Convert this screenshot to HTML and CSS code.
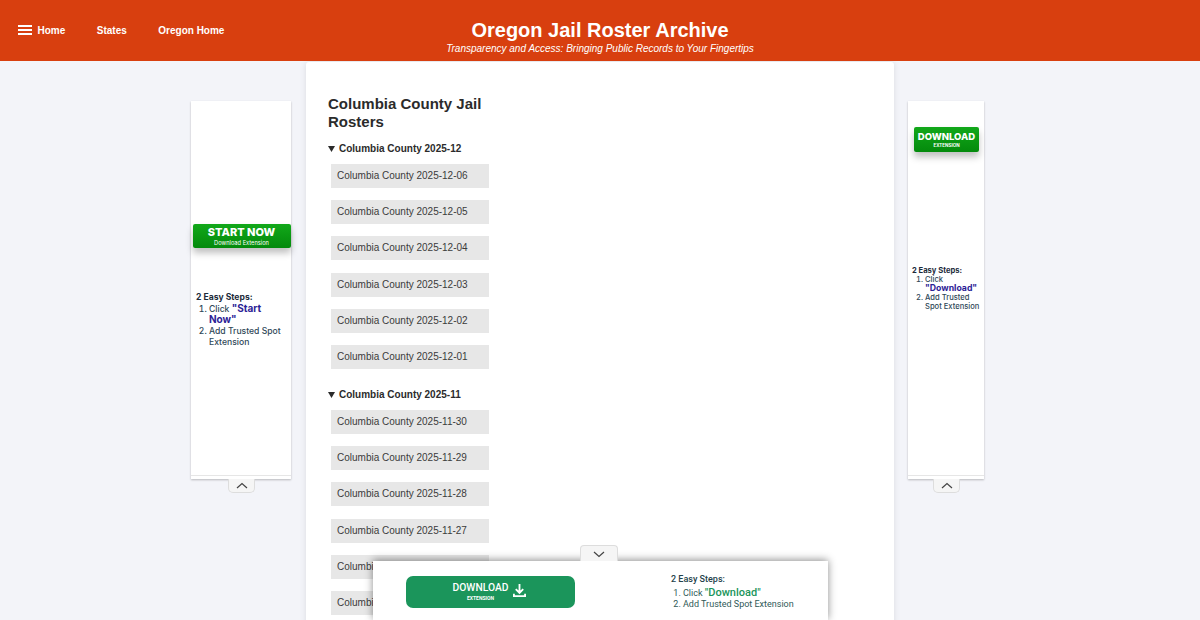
FILE: index.html
```html
<!doctype html>
<html>
    <head>
        <meta charset="utf-8" />
        <title>Columbia County Jail Rosters</title>
        <link rel="stylesheet" href="styles.css">
    </head>
    <body>
        <header class="site-header">
            <nav class="nav">
                <a class="nav-link nav-home" href="#">
                    <span class="burger"><i></i><i></i><i></i></span>
                    Home
                </a>
                <a class="nav-link" href="#">States</a>
                <a class="nav-link" href="#">Oregon Home</a>
            </nav>
            <div class="brand">
                <h1>Oregon Jail Roster Archive</h1>
                <p>Transparency and Access: Bringing Public Records to Your Fingertips</p>
            </div>
        </header>

        <div class="page">
            <aside class="side side-left">
                <div class="ad ad-left">
                    <div class="ad-body">
                        <a class="cta cta-left" href="#">
                            <strong>START NOW</strong>
                            <small>Download Extension</small>
                        </a>
                        <div class="steps">
                            <b>2 Easy Steps:</b>
                            <ol>
                                <li>Click <em>"Start Now"</em></li>
                                <li>Add Trusted Spot Extension</li>
                            </ol>
                        </div>
                    </div>
                    <button class="tab tab-up">
                        <svg width="12" height="7" viewBox="0 0 12 7"><path d="M1 6l5-4.5L11 6" /></svg>
                    </button>
                </div>
            </aside>

            <main class="card">
                <h2>Columbia County Jail Rosters</h2>

                <details open>
                    <summary>Columbia County 2025-12</summary>
                    <ul class="rosters">
                        <li><a href="#">Columbia County 2025-12-06</a></li>
                        <li><a href="#">Columbia County 2025-12-05</a></li>
                        <li><a href="#">Columbia County 2025-12-04</a></li>
                        <li><a href="#">Columbia County 2025-12-03</a></li>
                        <li><a href="#">Columbia County 2025-12-02</a></li>
                        <li><a href="#">Columbia County 2025-12-01</a></li>
                    </ul>
                </details>

                <details open>
                    <summary>Columbia County 2025-11</summary>
                    <ul class="rosters">
                        <li><a href="#">Columbia County 2025-11-30</a></li>
                        <li><a href="#">Columbia County 2025-11-29</a></li>
                        <li><a href="#">Columbia County 2025-11-28</a></li>
                        <li><a href="#">Columbia County 2025-11-27</a></li>
                        <li><a href="#">Columbia County 2025-11-26</a></li>
                        <li><a href="#">Columbia County 2025-11-25</a></li>
                    </ul>
                </details>
            </main>

            <aside class="side side-right">
                <div class="ad ad-right">
                    <div class="ad-body">
                        <a class="cta cta-right" href="#">
                            <strong>DOWNLOAD</strong>
                            <small>EXTENSION</small>
                        </a>
                        <div class="steps">
                            <b>2 Easy Steps:</b>
                            <ol>
                                <li>Click <em>"Download"</em></li>
                                <li>Add Trusted Spot Extension</li>
                            </ol>
                        </div>
                    </div>
                    <button class="tab tab-up">
                        <svg width="12" height="7" viewBox="0 0 12 7"><path d="M1 6l5-4.5L11 6" /></svg>
                    </button>
                </div>
            </aside>
        </div>

        <div class="bottom-ad">
            <button class="tab tab-down">
                <svg width="12" height="7" viewBox="0 0 12 7"><path d="M1 1l5 4.5L11 1" /></svg>
            </button>
            <a class="bottom-cta" href="#">
                <span class="bottom-label">
                    <strong>DOWNLOAD</strong>
                    <small>EXTENSION</small>
                </span>
                <svg width="13" height="15" viewBox="0 0 14 15"><path d="M7 0.5v9M3 6l4 4 4-4M1 11v2.5h12V11" /></svg>
            </a>
            <div class="bottom-steps">
                <b>2 Easy Steps:</b>
                <ol>
                    <li>Click <em>"Download"</em></li>
                    <li>Add Trusted Spot Extension</li>
                </ol>
            </div>
        </div>
    </body>
</html>
```

FILE: styles.css
```css
html,
body {
    height: 620px;
    overflow: hidden;
}
body {
    margin: 0;
    background: #f3f4f9;
    font-family: "Liberation Sans", Arial, sans-serif;
    color: #2b2b2b;
    position: relative;
}
.site-header {
    height: 61px;
    background: #d83f0f;
    color: #fff;
    position: relative;
    display: flex;
    justify-content: center;
    align-items: center;
}
.nav {
    position: absolute;
    left: 18px;
    top: 0;
    height: 60px;
    display: flex;
    align-items: center;
    gap: 31.5px;
}
.nav-link {
    color: #fff;
    font-size: 10px;
    font-weight: bold;
    text-decoration: none;
}
.nav-home {
    display: flex;
    align-items: center;
    gap: 6px;
}
.burger {
    display: flex;
    flex-direction: column;
    gap: 2px;
    width: 13.5px;
}
.burger i {
    display: block;
    height: 2px;
    background: #fff;
}
.brand {
    text-align: center;
    padding-top: 12px;
}
.brand h1 {
    margin: 0;
    font-size: 20px;
    line-height: 24px;
}
.brand p {
    margin: 0;
    font-size: 10px;
    line-height: 13px;
    font-style: italic;
}
.page {
    display: grid;
    grid-template-columns: 1fr 588px 1fr;
}
.side {
    display: flex;
    padding-top: 40px;
}
.side-left {
    justify-content: flex-end;
    padding-right: 15px;
}
.side-right {
    justify-content: flex-start;
    padding-left: 14px;
}
.card {
    background: #fff;
    margin-top: 1px;
    padding: 33px 22px;
    height: 800px;
    box-shadow: 0 0 6px rgba(0, 0, 0, 0.1);
    border-radius: 3px 3px 0 0;
}
.card h2 {
    margin: 0 0 11px;
    width: 170px;
    font-size: 15px;
    line-height: 17.5px;
}
details {
    margin-bottom: 18px;
}
summary {
    display: flex;
    align-items: center;
    gap: 4px;
    font-size: 10px;
    font-weight: bold;
    line-height: 16px;
    margin-bottom: 7px;
    cursor: pointer;
}
summary::before {
    content: "";
    flex: none;
    width: 7px;
    height: 6px;
    background: #2b2b2b;
    clip-path: polygon(0 0, 100% 0, 50% 100%);
}
.rosters {
    list-style: none;
    margin: 0;
    padding: 0 0 0 3px;
}
.rosters li {
    margin-bottom: 12.2px;
}
.rosters a {
    display: block;
    width: 158px;
    height: 24px;
    box-sizing: border-box;
    padding-left: 6px;
    line-height: 24px;
    background: #e7e7e7;
    color: #3b3b3b;
    font-size: 10px;
    text-decoration: none;
}
.ad {
    position: relative;
    height: 378px;
    background: #fff;
    box-shadow: 0 1px 2px rgba(0, 0, 0, 0.25);
}
.ad-left {
    width: 100px;
}
.ad-right {
    width: 76px;
}
.ad-body {
    display: flow-root;
    height: 374px;
    border-bottom: 1px solid #e6e6e6;
    font-family: Inter, "Liberation Sans", sans-serif;
    color: #2c3e50;
}
.cta {
    display: block;
    text-align: center;
    color: #fff;
    text-decoration: none;
    background: linear-gradient(#12a81a, #048a0c);
    border-radius: 2px;
    box-shadow: 0 5px 7px rgba(0, 0, 0, 0.25);
}
.cta strong,
.cta small {
    display: block;
}
.cta-left {
    margin: 123px 0.5px 0 1.5px;
    height: 24px;
}
.cta-left strong {
    font-size: 11px;
    font-weight: 800;
    line-height: 13px;
    padding-top: 2px;
}
.cta-left small {
    font-size: 5.7px;
    line-height: 7px;
}
.cta-right {
    margin: 26px 5px 0 6px;
    height: 25px;
}
.cta-right strong {
    font-size: 9.5px;
    font-weight: 800;
    line-height: 12px;
    padding-top: 4px;
}
.cta-right small {
    font-size: 4.5px;
    line-height: 6px;
    font-weight: bold;
}
.steps {
    color: #2f4858;
    font-weight: 500;
}
.steps b {
    color: #1c2b3a;
}
.steps ol {
    margin: 0;
    padding-left: 13px;
}
.steps em {
    font-style: normal;
    font-weight: bold;
    line-height: 1;
    color: #2c2296;
}
.ad-left .steps {
    margin: 44px 8px 0 5px;
    font-size: 8.6px;
    line-height: 10.7px;
}
.ad-left .steps em {
    font-size: 10px;
}
.ad-right .steps {
    margin: 114px 0 0 4px;
    font-size: 7.6px;
    line-height: 9px;
}
.ad-right .steps em {
    font-size: 8.7px;
}
.tab {
    display: block;
    border: 1px solid #ddd;
    background: #f5f5f5;
    padding: 0;
    width: 27px;
    height: 14px;
    text-align: center;
}
.tab svg {
    display: block;
    margin: 0 auto;
    fill: none;
    stroke: #444;
    stroke-width: 1.2;
}
.tab-up {
    position: absolute;
    top: 378px;
    left: 50%;
    margin-left: -13px;
    border-top: none;
    border-radius: 0 0 5px 5px;
}
.tab-down {
    position: absolute;
    top: -16px;
    left: 207px;
    width: 38px;
    height: 16px;
    padding-top: 2px;
    border-bottom: none;
    border-radius: 4px 4px 0 0;
}
.bottom-ad {
    position: absolute;
    left: 373px;
    top: 561px;
    width: 455px;
    height: 59px;
    box-sizing: border-box;
    background: #fff;
    box-shadow: 0 -1px 8px rgba(0, 0, 0, 0.45);
    font-family: Roboto, "Liberation Sans", sans-serif;
    display: flex;
    padding: 15px 0 0 33px;
}
.bottom-cta {
    width: 169px;
    height: 32px;
    background: #1b955b;
    border-radius: 7px;
    color: #fff;
    text-decoration: none;
    display: flex;
    justify-content: center;
    align-items: center;
    gap: 5px;
}
.bottom-cta svg {
    fill: none;
    stroke: #fff;
    stroke-width: 2;
    margin: -3px 2px 0 0;
}
.bottom-label {
    text-align: center;
}
.bottom-label strong,
.bottom-label small {
    display: block;
}
.bottom-label strong {
    font-size: 10.3px;
    font-weight: 500;
    line-height: 12px;
}
.bottom-label small {
    font-size: 5px;
    font-weight: bold;
    line-height: 9px;
}
.bottom-steps {
    margin: -2px 0 0 96px;
    font-size: 9px;
    line-height: 11.5px;
    color: #2f5a57;
}
.bottom-steps b {
    display: block;
    margin-bottom: 1px;
    color: #24424a;
    font-weight: 500;
}
.bottom-steps ol {
    margin: 0;
    padding-left: 12px;
}
.bottom-steps em {
    font-style: normal;
    font-weight: 500;
    font-size: 11px;
    color: #1b955b;
}
```
